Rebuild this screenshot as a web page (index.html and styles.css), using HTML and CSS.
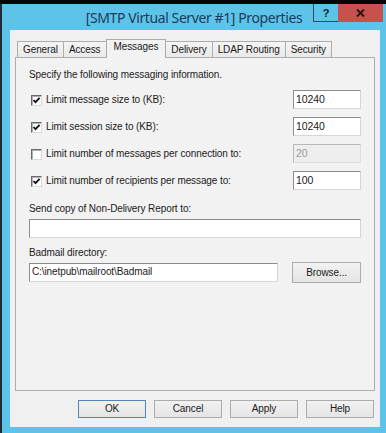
FILE: index.html
```html
<!DOCTYPE html>
<html>
<head>
<meta charset="utf-8">
<title>[SMTP Virtual Server #1] Properties</title>
<link rel="stylesheet" href="styles.css">
</head>
<body>
<div class="desktop"></div>
<div class="window">
  <div class="titlebar">
    <div class="title">[SMTP Virtual Server #1] Properties</div>
    <div class="caption-buttons">
      <div class="cap-btn help">?</div>
      <div class="cap-btn close">
        <svg width="9" height="8" viewBox="0 0 9 8"><path d="M1 0.5 L8 7.5 M8 0.5 L1 7.5" stroke="#2a1414" stroke-width="2" fill="none"/></svg>
      </div>
    </div>
  </div>
  <div class="client">
    <div class="tabs">
      <div class="tab">General</div>
      <div class="tab">Access</div>
      <div class="tab selected">Messages</div>
      <div class="tab">Delivery</div>
      <div class="tab">LDAP Routing</div>
      <div class="tab">Security</div>
    </div>
    <div class="panel">
      <div class="intro">Specify the following messaging information.</div>
      <div class="limits">
        <div class="limit-row">
          <span class="checkbox"><svg width="9" height="9" viewBox="0 0 9 9"><path d="M1.5 4 L3.5 6.2 L7.6 1.8" stroke="#111" stroke-width="1.8" fill="none"/></svg></span>
          <span class="label">Limit message size to (KB):</span>
          <span class="textbox small">10240</span>
        </div>
        <div class="limit-row">
          <span class="checkbox"><svg width="9" height="9" viewBox="0 0 9 9"><path d="M1.5 4 L3.5 6.2 L7.6 1.8" stroke="#111" stroke-width="1.8" fill="none"/></svg></span>
          <span class="label">Limit session size to (KB):</span>
          <span class="textbox small">10240</span>
        </div>
        <div class="limit-row">
          <span class="checkbox"></span>
          <span class="label">Limit number of messages per connection to:</span>
          <span class="textbox small disabled">20</span>
        </div>
        <div class="limit-row">
          <span class="checkbox"><svg width="9" height="9" viewBox="0 0 9 9"><path d="M1.5 4 L3.5 6.2 L7.6 1.8" stroke="#111" stroke-width="1.8" fill="none"/></svg></span>
          <span class="label">Limit number of recipients per message to:</span>
          <span class="textbox small">100</span>
        </div>
      </div>
      <div class="field-label ndr-label">Send copy of Non-Delivery Report to:</div>
      <div class="textbox wide"></div>
      <div class="field-label badmail-label">Badmail directory:</div>
      <div class="path-row">
        <div class="textbox path">C:\inetpub\mailroot\Badmail</div>
        <div class="btn browse">Browse...</div>
      </div>
    </div>
    <div class="dialog-buttons">
      <div class="btn default">OK</div>
      <div class="btn">Cancel</div>
      <div class="btn">Apply</div>
      <div class="btn">Help</div>
    </div>
  </div>
</div>
</body>
</html>
```

FILE: styles.css
```css
* { box-sizing: border-box; }

body {
  margin: 0;
  width: 386px;
  height: 433px;
  overflow: hidden;
  background: #050505;
  font-family: "Liberation Sans", Arial, sans-serif;
  font-size: 10px;
  letter-spacing: -0.1px;
  color: #1a1a1a;
}

.desktop { height: 4px; }

.window {
  height: 429px;
  background: #5dc3e8;
  border-left: 2px solid #1e2c33;
  display: flex;
  flex-direction: column;
}

.titlebar {
  height: 26px;
  display: grid;
  grid-template-columns: 1fr auto 1fr;
}

.title {
  grid-column: 2;
  font-family: "Noto Sans", "Open Sans", sans-serif;
  font-size: 14px;
  letter-spacing: -0.4px;
  color: #1d3a5c;
  line-height: 27px;
  white-space: nowrap;
}

.caption-buttons {
  grid-column: 3;
  justify-self: end;
  display: flex;
  height: 18px;
  margin-right: 3px;
}

.cap-btn {
  height: 18px;
  display: flex;
  align-items: center;
  justify-content: center;
}

.help {
  width: 25px;
  border-left: 1px solid #2f4a58;
  border-bottom: 1px solid #2f4a58;
  font-family: "Liberation Sans", Arial, sans-serif;
  font-weight: bold;
  font-size: 11px;
  color: #1a2228;
}

.close {
  width: 45px;
  background: #c8514f;
}

.client {
  flex: 1;
  margin: 0 6px 6px 8px;
  background: #f0f0f0;
  padding: 9px 5px;
  display: flex;
  flex-direction: column;
}

.tabs {
  display: flex;
  align-items: flex-end;
  height: 19px;
  margin: 0 0 -1px 2px;
  position: relative;
  z-index: 1;
}

.tab {
  height: 16px;
  margin-bottom: 1px;
  padding: 0 5px;
  line-height: 16px;
  border: 1px solid #acacac;
  border-bottom: none;
  background: linear-gradient(#f4f4f4, #e9e9e9);
  white-space: nowrap;
}

.tab + .tab { margin-left: -1px; }

.tab.selected {
  height: 19px;
  margin-bottom: 0;
  padding: 0 7px;
  line-height: 14px;
  background: #f2f2f2;
}

.panel {
  flex: 1;
  border: 1px solid #adadad;
  background: #f2f2f2;
  padding: 11px 13px 0 13px;
  display: flex;
  flex-direction: column;
}

.intro { line-height: 12px; }

.limits {
  margin-top: 9px;
  display: flex;
  flex-direction: column;
  gap: 8px;
}

.limit-row {
  height: 19px;
  display: flex;
  align-items: center;
}

.checkbox {
  width: 11px;
  height: 11px;
  margin: 1px 4px 0 2px;
  background: #fff;
  border: 1px solid;
  border-color: #6a6a6a #d8d8d8 #d8d8d8 #6a6a6a;
  box-shadow: inset 1px 1px 0 #b0b0b0;
  display: flex;
  align-items: center;
  justify-content: center;
}

.textbox {
  height: 19px;
  padding-left: 2px;
  line-height: 16px;
  font-size: 10.5px;
  background: #fff;
  border: 1px solid;
  border-color: #8c8c8c #d6d6d6 #d6d6d6 #8c8c8c;
  white-space: nowrap;
}

.textbox.small {
  width: 68px;
  margin-left: auto;
}

.textbox.disabled {
  background: #eeeeee;
  color: #9a9a9a;
  border-color: #b8b8b8 #dedede #dedede #b8b8b8;
}

.field-label { line-height: 12px; }
.ndr-label { margin-top: 13px; margin-bottom: 4px; }
.badmail-label { margin-top: 9px; margin-bottom: 3px; }

.path-row {
  display: flex;
  align-items: center;
  gap: 14px;
}

.textbox.path { width: 250px; font-size: 10px; }

.btn {
  height: 18px;
  width: 68px;
  border: 1px solid #acacac;
  background: linear-gradient(#f2f2f2, #e4e4e4);
  text-align: center;
  line-height: 16px;
  color: #1a1a1a;
}

.btn.browse {
  width: 69px;
  height: 21px;
  line-height: 19px;
}

.btn.default {
  border-color: #4f86b3;
}

.dialog-buttons {
  margin-top: 9px;
  padding-right: 1px;
  display: flex;
  justify-content: flex-end;
  gap: 8px;
}
```
